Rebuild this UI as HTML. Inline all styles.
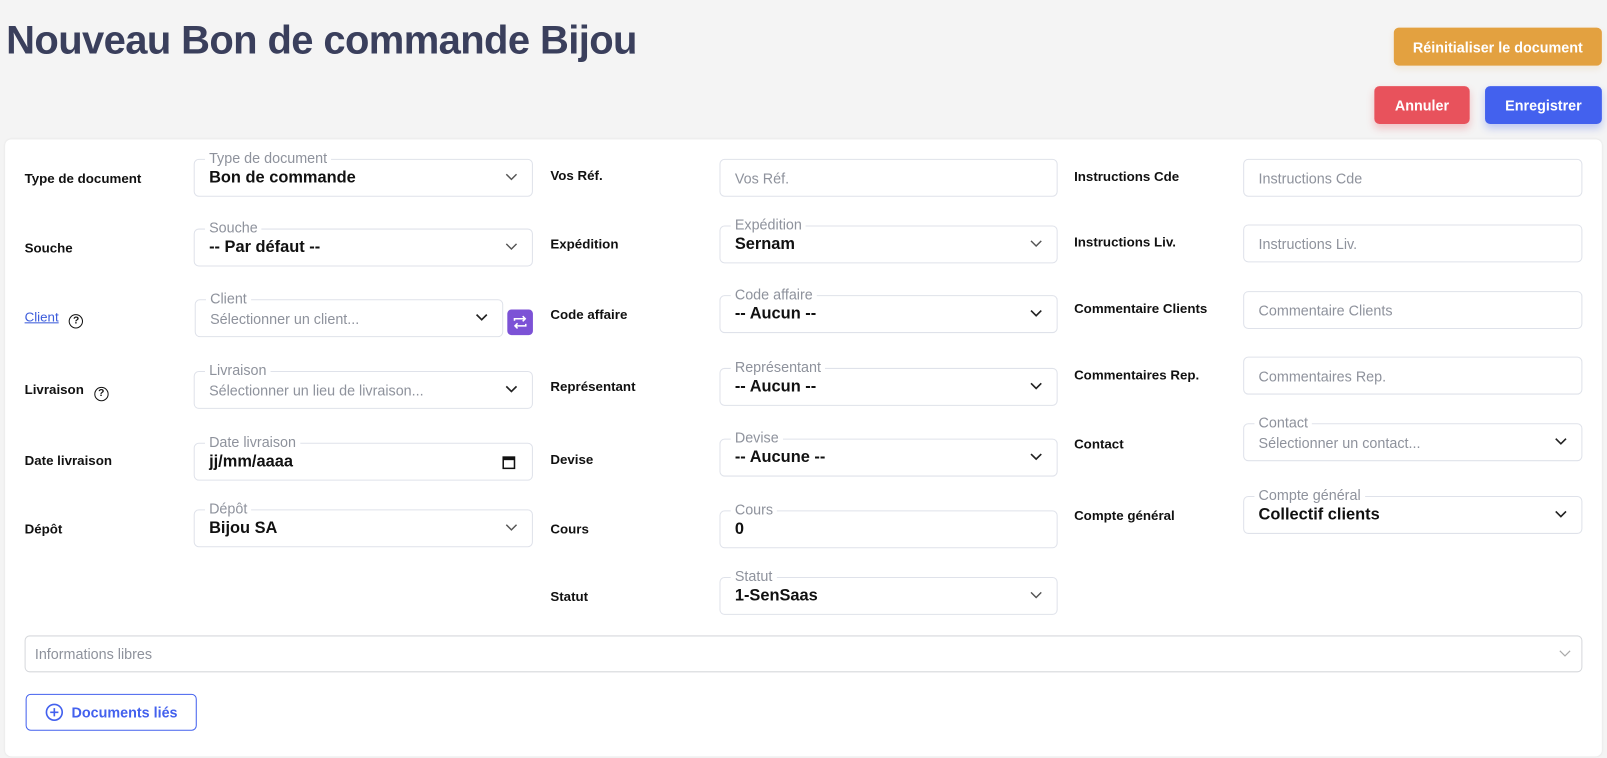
<!DOCTYPE html>
<html><head><meta charset="utf-8"><style>
*{box-sizing:border-box;margin:0;padding:0}
body{width:1607px;height:758px;background:#f4f4f4;font-family:"Liberation Sans",sans-serif;position:relative;overflow:hidden;color:#111}
#w{position:absolute;left:0;top:0;width:1568px;height:740px;transform:scale(1.02487);transform-origin:0 0}
.a{position:absolute}
h1{position:absolute;left:6px;top:18px;font-size:39px;font-weight:bold;color:#3a3f5c;letter-spacing:-0.6px}
.btn{position:absolute;color:#fff;font-weight:bold;font-size:14px;border-radius:5px;display:flex;align-items:center;justify-content:center}
.card{position:absolute;left:5px;top:136px;width:1558px;height:602px;background:#fff;border-radius:6px;box-shadow:0 0 2px rgba(0,0,0,.08)}
.lbl{position:absolute;font-size:13px;font-weight:bold;color:#111;transform:translateY(-50%)}
.f{position:absolute;height:37px;border:1px solid #dfe2ea;border-radius:5px;background:#fff}
.f .lg{position:absolute;left:10px;top:-10px;background:#fff;padding:0 4px;font-size:14px;color:#8e929c}
.f .v{position:absolute;left:14px;top:9px;font-size:16px;color:#111;font-weight:bold}
.f .p{position:absolute;left:14px;top:10px;font-size:14px;color:#8e929c}
.chev{position:absolute;right:14px;top:13px;width:12px;height:8px}
.q{display:inline-block;width:14px;height:14px;border:1.6px solid #111;border-radius:50%;font-size:10px;text-align:center;line-height:11px;margin-left:10px;vertical-align:-2px;font-weight:bold}
</style></head><body><div id="w">
<h1>Nouveau Bon de commande Bijou</h1>
<div class="btn" style="left:1360px;top:27px;width:203px;height:37px;background:#e3a140;box-shadow:0 3px 6px rgba(227,161,64,.15)">Réinitialiser le document</div>
<div class="btn" style="left:1341px;top:84px;width:93px;height:37px;background:#e8525c;box-shadow:0 4px 8px rgba(232,82,92,.3)">Annuler</div>
<div class="btn" style="left:1449px;top:84px;width:114px;height:37px;background:#4361ee;box-shadow:0 4px 8px rgba(67,97,238,.3)">Enregistrer</div>
<div class="card"></div>

<div class="lbl" style="left:24px;top:174px">Type de document</div>
<div class="lbl" style="left:24px;top:242px">Souche</div>
<div class="lbl" style="left:24px;top:311px"><span style="color:#3b5bdb;text-decoration:underline;font-weight:500">Client</span><span class="q">?</span></div>
<div class="lbl" style="left:24px;top:382px">Livraison<span class="q">?</span></div>
<div class="lbl" style="left:24px;top:449px">Date livraison</div>
<div class="lbl" style="left:24px;top:516px">Dépôt</div>

<div class="f" style="left:189px;top:155px;width:331px"><span class="lg">Type de document</span><span class="v">Bon de commande</span><svg class="chev" viewBox="0 0 12 8"><path d="M1 1l5 5 5-5" fill="none" stroke="#555" stroke-width="1.4"/></svg></div>
<div class="f" style="left:189px;top:223px;width:331px"><span class="lg">Souche</span><span class="v">-- Par défaut --</span><svg class="chev" viewBox="0 0 12 8"><path d="M1 1l5 5 5-5" fill="none" stroke="#555" stroke-width="1.4"/></svg></div>
<div class="f" style="left:190px;top:292px;width:301px"><span class="lg">Client</span><span class="p">Sélectionner un client...</span><svg class="chev" viewBox="0 0 12 8"><path d="M1 1l5 5 5-5" fill="none" stroke="#222" stroke-width="1.6"/></svg></div>
<div class="a" style="left:495px;top:302px;width:25px;height:25px;background:#7c52d6;border-radius:4px"><svg width="25" height="25" viewBox="0 0 25 25"><path d="M7 11v-2h10M15 6.5l2.5 2.5-2.5 2.5M18 14v2H8M10 18.5L7.5 16 10 13.5" fill="none" stroke="#fff" stroke-width="1.5"/></svg></div>
<div class="f" style="left:189px;top:362px;width:331px"><span class="lg">Livraison</span><span class="p">Sélectionner un lieu de livraison...</span><svg class="chev" viewBox="0 0 12 8"><path d="M1 1l5 5 5-5" fill="none" stroke="#222" stroke-width="1.6"/></svg></div>
<div class="f" style="left:189px;top:432px;width:331px"><span class="lg">Date livraison</span><span class="v">jj/mm/aaaa</span><svg class="a" style="right:16px;top:11px" width="13" height="14" viewBox="0 0 13 14"><rect x="1" y="2" width="11" height="11" fill="none" stroke="#111" stroke-width="1.5"/><rect x="1" y="2" width="11" height="3" fill="#111"/></svg></div>
<div class="f" style="left:189px;top:497px;width:331px"><span class="lg">Dépôt</span><span class="v">Bijou SA</span><svg class="chev" viewBox="0 0 12 8"><path d="M1 1l5 5 5-5" fill="none" stroke="#555" stroke-width="1.4"/></svg></div>

<div class="lbl" style="left:537px;top:171px">Vos Réf.</div>
<div class="lbl" style="left:537px;top:238px">Expédition</div>
<div class="lbl" style="left:537px;top:307px">Code affaire</div>
<div class="lbl" style="left:537px;top:377px">Représentant</div>
<div class="lbl" style="left:537px;top:448px">Devise</div>
<div class="lbl" style="left:537px;top:516px">Cours</div>
<div class="lbl" style="left:537px;top:582px">Statut</div>

<div class="f" style="left:702px;top:155px;width:330px"><span class="p">Vos Réf.</span></div>
<div class="f" style="left:702px;top:220px;width:330px"><span class="lg">Expédition</span><span class="v">Sernam</span><svg class="chev" viewBox="0 0 12 8"><path d="M1 1l5 5 5-5" fill="none" stroke="#555" stroke-width="1.4"/></svg></div>
<div class="f" style="left:702px;top:288px;width:330px"><span class="lg">Code affaire</span><span class="v">-- Aucun --</span><svg class="chev" viewBox="0 0 12 8"><path d="M1 1l5 5 5-5" fill="none" stroke="#222" stroke-width="1.6"/></svg></div>
<div class="f" style="left:702px;top:359px;width:330px"><span class="lg">Représentant</span><span class="v">-- Aucun --</span><svg class="chev" viewBox="0 0 12 8"><path d="M1 1l5 5 5-5" fill="none" stroke="#222" stroke-width="1.6"/></svg></div>
<div class="f" style="left:702px;top:428px;width:330px"><span class="lg">Devise</span><span class="v">-- Aucune --</span><svg class="chev" viewBox="0 0 12 8"><path d="M1 1l5 5 5-5" fill="none" stroke="#222" stroke-width="1.6"/></svg></div>
<div class="f" style="left:702px;top:498px;width:330px"><span class="lg">Cours</span><span class="v">0</span></div>
<div class="f" style="left:702px;top:563px;width:330px"><span class="lg">Statut</span><span class="v">1-SenSaas</span><svg class="chev" viewBox="0 0 12 8"><path d="M1 1l5 5 5-5" fill="none" stroke="#555" stroke-width="1.4"/></svg></div>

<div class="lbl" style="left:1048px;top:172px">Instructions Cde</div>
<div class="lbl" style="left:1048px;top:236px">Instructions Liv.</div>
<div class="lbl" style="left:1048px;top:301px">Commentaire Clients</div>
<div class="lbl" style="left:1048px;top:366px">Commentaires Rep.</div>
<div class="lbl" style="left:1048px;top:433px">Contact</div>
<div class="lbl" style="left:1048px;top:503px">Compte général</div>

<div class="f" style="left:1213px;top:155px;width:331px"><span class="p">Instructions Cde</span></div>
<div class="f" style="left:1213px;top:219px;width:331px"><span class="p">Instructions Liv.</span></div>
<div class="f" style="left:1213px;top:284px;width:331px"><span class="p">Commentaire Clients</span></div>
<div class="f" style="left:1213px;top:348px;width:331px"><span class="p">Commentaires Rep.</span></div>
<div class="f" style="left:1213px;top:413px;width:331px"><span class="lg">Contact</span><span class="p">Sélectionner un contact...</span><svg class="chev" viewBox="0 0 12 8"><path d="M1 1l5 5 5-5" fill="none" stroke="#222" stroke-width="1.6"/></svg></div>
<div class="f" style="left:1213px;top:484px;width:331px"><span class="lg">Compte général</span><span class="v">Collectif clients</span><svg class="chev" viewBox="0 0 12 8"><path d="M1 1l5 5 5-5" fill="none" stroke="#222" stroke-width="1.6"/></svg></div>

<div class="f" style="left:24px;top:620px;width:1520px;height:36px;border-color:#d6d8dc"><span class="p" style="left:9px;top:9px">Informations libres</span><svg class="chev" viewBox="0 0 12 8" style="right:10px"><path d="M1 1l5 5 5-5" fill="none" stroke="#aaa" stroke-width="1.2"/></svg></div>
<div class="a" style="left:25px;top:677px;width:167px;height:36px;border:1px solid #4361ee;border-radius:5px;color:#4361ee;font-weight:bold;font-size:14px;display:flex;align-items:center;justify-content:center;gap:8px"><svg width="18" height="18" viewBox="0 0 18 18"><circle cx="9" cy="9" r="7.7" fill="none" stroke="#4361ee" stroke-width="1.6"/><path d="M9 5v8M5 9h8" stroke="#4361ee" stroke-width="1.6"/></svg>Documents liés</div>
</div></body></html>
